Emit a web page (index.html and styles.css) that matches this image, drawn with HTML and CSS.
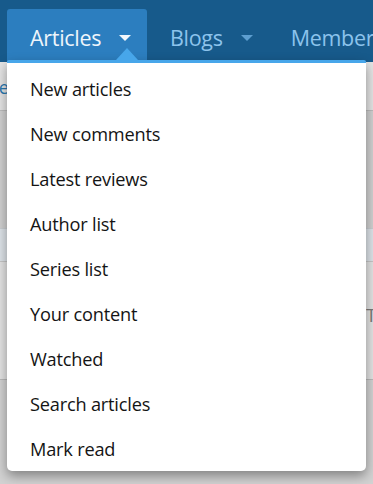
FILE: index.html
```html
<!DOCTYPE html>
<html>
<head>
<meta charset="utf-8">
<link rel="stylesheet" href="styles.css">
</head>
<body>
<div class="page">
  <nav class="navbar">
    <div class="tab active">
      <span class="tab-label">Articles</span>
      <span class="caret"></span>
    </div>
    <div class="tab">
      <span class="tab-label">Blogs</span>
      <span class="caret"></span>
    </div>
    <div class="tab">
      <span class="tab-label">Members</span>
    </div>
  </nav>
  <div class="content">
    <div class="strip strip-sub"><span class="sub-link">Search</span></div>
    <div class="strip strip-a"></div>
    <div class="strip strip-b"></div>
    <div class="strip strip-c"><span class="edge-text">T</span></div>
    <div class="strip strip-d"></div>
  </div>

  <div class="dropdown">
    <ul class="menu">
      <li>New articles</li>
      <li>New comments</li>
      <li>Latest reviews</li>
      <li>Author list</li>
      <li>Series list</li>
      <li>Your content</li>
      <li>Watched</li>
      <li>Search articles</li>
      <li>Mark read</li>
    </ul>
  </div>
</div>
</body>
</html>
```
FILE: styles.css
```css
* { box-sizing: border-box; }
html, body { margin: 0; padding: 0; }
body {
  font-family: "Open Sans", "Noto Sans", "Liberation Sans", sans-serif;
  background: #d0d0d0;
  overflow: hidden;
}
.page {
  position: relative;
  width: 373px;
  height: 484px;
  overflow: hidden;
}
.navbar {
  height: 62px;
  background: #175a8b;
  display: flex;
  align-items: flex-end;
  padding-left: 7px;
  white-space: nowrap;
}
.tab {
  height: 53px;
  display: flex;
  align-items: center;
  padding: 4px 14px 0 23px;
  color: #8cc3ec;
  font-size: 21.5px;
  border-radius: 3px 3px 0 0;
  flex-shrink: 0;
}
.tab.active {
  background: #2c7ebf;
  color: #eef5fb;
  width: 140px;
}
.tab-label { letter-spacing: -0.3px; }
.caret {
  width: 0;
  height: 0;
  margin-left: 18px;
  border-left: 6.5px solid transparent;
  border-right: 6.5px solid transparent;
  border-top: 6.5px solid #5d9ed0;
  margin-top: 1px;
}
.tab.active .caret { border-top-color: #f4f8fc; }
.tab:nth-child(2) { padding-left: 23px; padding-right: 15px; }
.tab:nth-child(3) { padding-left: 23px; }

.content { display: flex; flex-direction: column; }
.strip { position: relative; }
.strip-sub {
  height: 49px;
  background: #e4e4e4;
  border-bottom: 1px solid #bcbcbc;
  overflow: hidden;
}
.sub-link {
  position: absolute;
  left: -11px;
  top: 13px;
  font-size: 18px;
  color: #2a78b0;
}
.strip-a { height: 117px; background: #d0d0d0; }
.strip-b { height: 34px; background: #dde3e8; border-top: 1px solid #c9cdd1; border-bottom: 1px solid #c6c6c6; }
.strip-c { height: 118px; background: #e3e3e3; border-bottom: 1px solid #b9b9b9; }
.edge-text {
  position: absolute;
  left: 366px;
  top: 40px;
  font-size: 19px;
  color: #7a7a7a;
}
.strip-d { height: 110px; background: #d2d2d2; }

.dropdown {
  position: absolute;
  left: 7px;
  top: 60px;
  width: 359px;
  height: 411px;
  background: #ffffff;
  border-top: 3px solid #47a6ea;
  border-radius: 2px 2px 5px 5px;
  box-shadow: 0 5px 12px rgba(0, 0, 0, 0.38);
}
.dropdown::before {
  content: "";
  position: absolute;
  left: 109px;
  top: -15px;
  width: 0;
  height: 0;
  border-left: 11px solid transparent;
  border-right: 11px solid transparent;
  border-bottom: 12px solid #47a6ea;
}
.menu {
  list-style: none;
  margin: 0;
  padding: 3px 0 0 0;
}
.menu li {
  height: 45px;
  display: flex;
  align-items: center;
  padding-left: 23px;
  font-size: 18.2px;
  color: #141414;
  letter-spacing: -0.2px;
}
```
